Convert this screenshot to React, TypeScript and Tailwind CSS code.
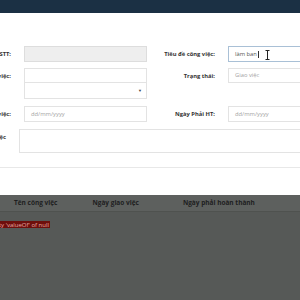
import React from "react";

const font = { fontFamily: '"Open Sans", "Liberation Sans", sans-serif' };

function Label({ children, className = "" }: { children: React.ReactNode; className?: string }) {
  return (
    <div className={`shrink-0 text-right text-[5.8px] font-bold leading-[16px] text-[#333] ${className}`}>
      {children}
    </div>
  );
}

function Input({
  value,
  placeholder,
  disabled,
  focused,
  className = "",
}: {
  value?: string;
  placeholder?: string;
  disabled?: boolean;
  focused?: boolean;
  className?: string;
}) {
  return (
    <div
      className={`flex h-[16px] shrink-0 items-center border px-[6px] text-[5.8px] ${
        disabled ? "border-[#ddd] bg-[#eee]" : focused ? "border-[#a9c0d6] bg-white" : "border-[#e3e3e3] bg-white"
      } ${className}`}
    >
      {value ? <span className="text-[#555]">{value}</span> : <span className="text-[#a3a3a3]">{placeholder}</span>}
      {focused && <span className="ml-px h-[7px] w-px bg-[#333]" />}
    </div>
  );
}

export default function App() {
  return (
    <div className="flex h-[300px] w-[300px] flex-col overflow-hidden bg-[#565957]" style={font}>
      <div className="h-[13px] shrink-0 bg-[#1b3044]" />

      <div className="relative flex h-[182px] shrink-0 flex-col bg-white">
        <div className="flex flex-col pt-[33px]">
          {/* row 1 */}
          <div className="flex items-start">
            <Label className="ml-[-69px] w-[80px]">STT:</Label>
            <Input disabled className="ml-[13px] w-[123px]" />
            <Label className="ml-[3px] w-[65px]">Tiêu đề công việc:</Label>
            <Input value="làm ban" focused className="ml-[13px] w-[90px]" />
          </div>

          {/* row 2 */}
          <div className="mt-[6px] flex items-start">
            <Label className="ml-[-69px] w-[80px] leading-[15px]">Người nhận việc:</Label>
            <div className="ml-[13px] flex w-[123px] shrink-0 flex-col">
              <div className="h-[15px] border border-[#e3e3e3] bg-white" />
              <div className="flex h-[16px] items-center justify-end border border-t-0 border-[#e3e3e3] bg-white pr-[4px]">
                <span className="text-[4px] leading-none text-[#444]">▼</span>
              </div>
            </div>
            <Label className="ml-[3px] w-[65px] leading-[15px]">Trạng thái:</Label>
            <div className="ml-[13px] flex h-[15px] w-[90px] shrink-0 items-center border border-[#e3e3e3] px-[6px] text-[5.8px] text-[#a3a3a3]">
              Giao việc
            </div>
          </div>

          {/* row 3 */}
          <div className="mt-[7px] flex items-start">
            <Label className="ml-[-69px] w-[80px] leading-[15px]">Ngày giao việc:</Label>
            <Input placeholder="dd/mm/yyyy" className="ml-[13px] h-[15px] w-[123px]" />
            <Label className="ml-[3px] w-[65px] leading-[15px]">Ngày Phải HT:</Label>
            <Input placeholder="dd/mm/yyyy" className="ml-[13px] h-[15px] w-[90px]" />
          </div>

          {/* row 4 */}
          <div className="mt-[7px] flex items-start">
            <div className="ml-[-74px] mt-[3px] w-[80px] shrink-0 text-right text-[5.8px] font-bold leading-[10px] text-[#333]">
              Mô tả công việc
            </div>
            <div className="ml-[13px] h-[24px] w-[300px] shrink-0 border border-[#e3e3e3] bg-white" />
          </div>
        </div>

        <div className="mt-[14px] border-t border-[#e8e8e8]" />

        {/* text cursor */}
        <svg className="absolute left-[265px] top-[37px]" width="5" height="10" viewBox="0 0 5 10">
          <path d="M0.5 0.5h4M2.5 0.5v9M0.5 9.5h4" stroke="#222" strokeWidth="1" fill="none" />
        </svg>
      </div>

      <div className="flex h-[17px] shrink-0 items-center border-b border-[#4f524f] bg-[#5d605e] text-[6.5px] font-bold text-[#1e1e1e]">
        <span className="ml-[14px]">Tên công việc</span>
        <span className="ml-[35px]">Ngày giao việc</span>
        <span className="ml-[44px]">Ngày phải hoàn thành</span>
      </div>

      <div className="mt-[9px] flex">
        <div className="flex h-[7px] w-[50px] items-center justify-end overflow-hidden whitespace-nowrap bg-[#6e0f0c] pr-[1px] text-[6px] leading-none text-[#e6a9a4]">
          Cannot read property 'valueOf' of null
        </div>
      </div>
    </div>
  );
}
